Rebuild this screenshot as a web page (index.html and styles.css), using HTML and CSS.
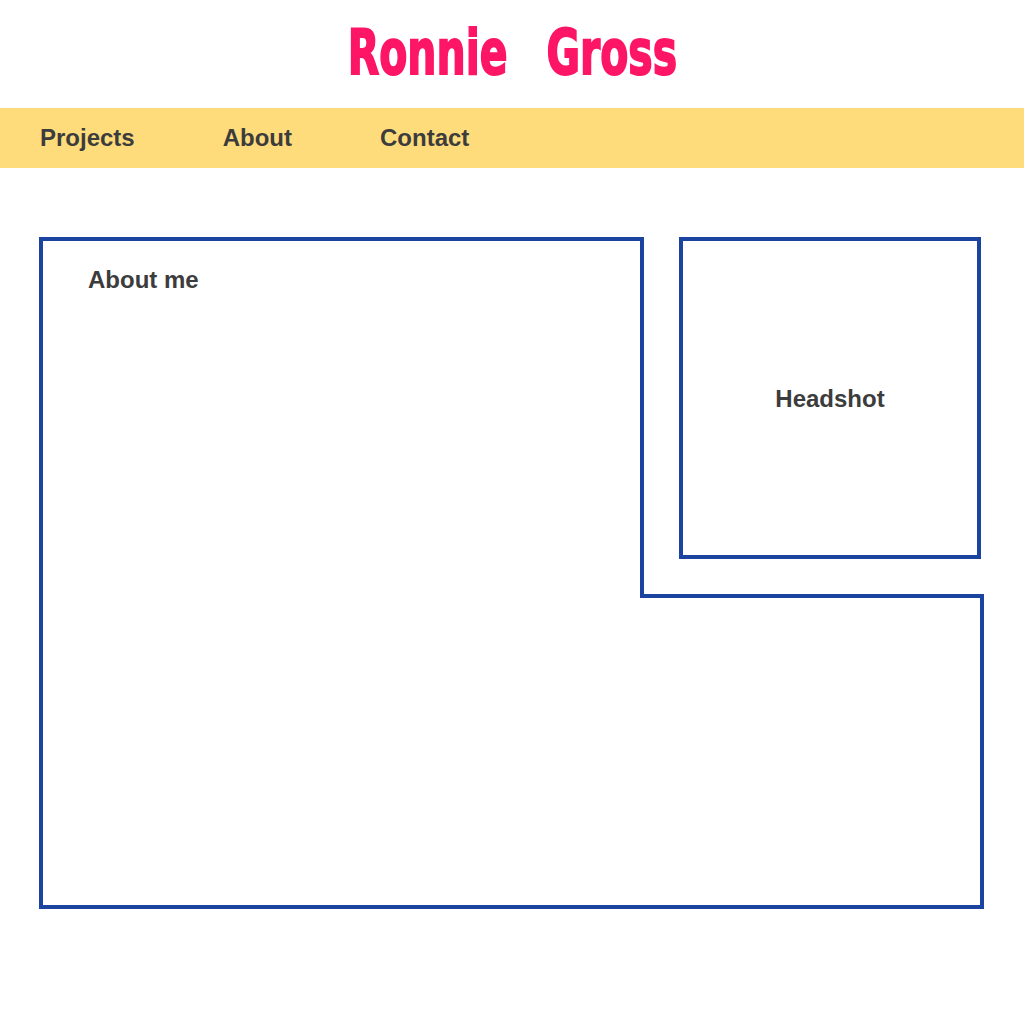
FILE: index.html
```html
<!DOCTYPE html>
<html lang="en">
<head>
<meta charset="utf-8">
<title>Ronnie Gross</title>
<link rel="stylesheet" href="styles.css">
</head>
<body>
<header class="site-header">
  <h1 class="site-title">Ronnie Gross</h1>
</header>
<nav class="site-nav">
  <a class="nav-link" href="#projects">Projects</a>
  <a class="nav-link" href="#about">About</a>
  <a class="nav-link" href="#contact">Contact</a>
</nav>
<main class="content">
  <section class="about">
    <div class="corner">
      <div class="headshot">Headshot</div>
    </div>
    <h2 class="about-title">About me</h2>
  </section>
</main>
</body>
</html>
```

FILE: styles.css
```css
html, body {
  margin: 0;
  padding: 0;
  background: #ffffff;
}

body {
  font-family: "Liberation Sans", Arial, sans-serif;
  color: #3c3c3c;
}

.site-header {
  height: 108px;
  box-sizing: border-box;
  padding-top: 21px;
  text-align: center;
}

.site-title {
  display: inline-block;
  margin: 0;
  font-family: "DejaVu Sans", sans-serif;
  font-weight: bold;
  font-size: 63px;
  line-height: 64px;
  color: #fd1566;
  word-spacing: 38px;
  -webkit-text-stroke: 2px #fd1566;
  transform: scaleX(0.65);
  transform-origin: center;
}

.site-nav {
  height: 60px;
  background: #ffdc7b;
  display: flex;
  align-items: center;
  gap: 88px;
  padding-left: 40px;
}

.nav-link {
  font-weight: bold;
  font-size: 24px;
  line-height: 28px;
  color: #3c3c3c;
  text-decoration: none;
}

.content {
  padding: 69px 0 0 39px;
}

.about {
  width: 945px;
  height: 672px;
  box-sizing: border-box;
  border: 4px solid #1b44a0;
}

.corner {
  float: right;
  width: 344px;
  height: 361px;
  box-sizing: border-box;
  margin: -4px -4px 0 0;
  padding-left: 35px;
  background: #ffffff;
  border-left: 4px solid #1b44a0;
  border-bottom: 4px solid #1b44a0;
}

.headshot {
  width: 302px;
  height: 322px;
  box-sizing: border-box;
  border: 4px solid #1b44a0;
  padding-top: 2px;
  display: flex;
  align-items: center;
  justify-content: center;
  font-weight: bold;
  font-size: 24px;
  line-height: 28px;
}

.about-title {
  margin: 0;
  padding: 25px 0 0 45px;
  font-weight: bold;
  font-size: 24px;
  line-height: 28px;
}
```
